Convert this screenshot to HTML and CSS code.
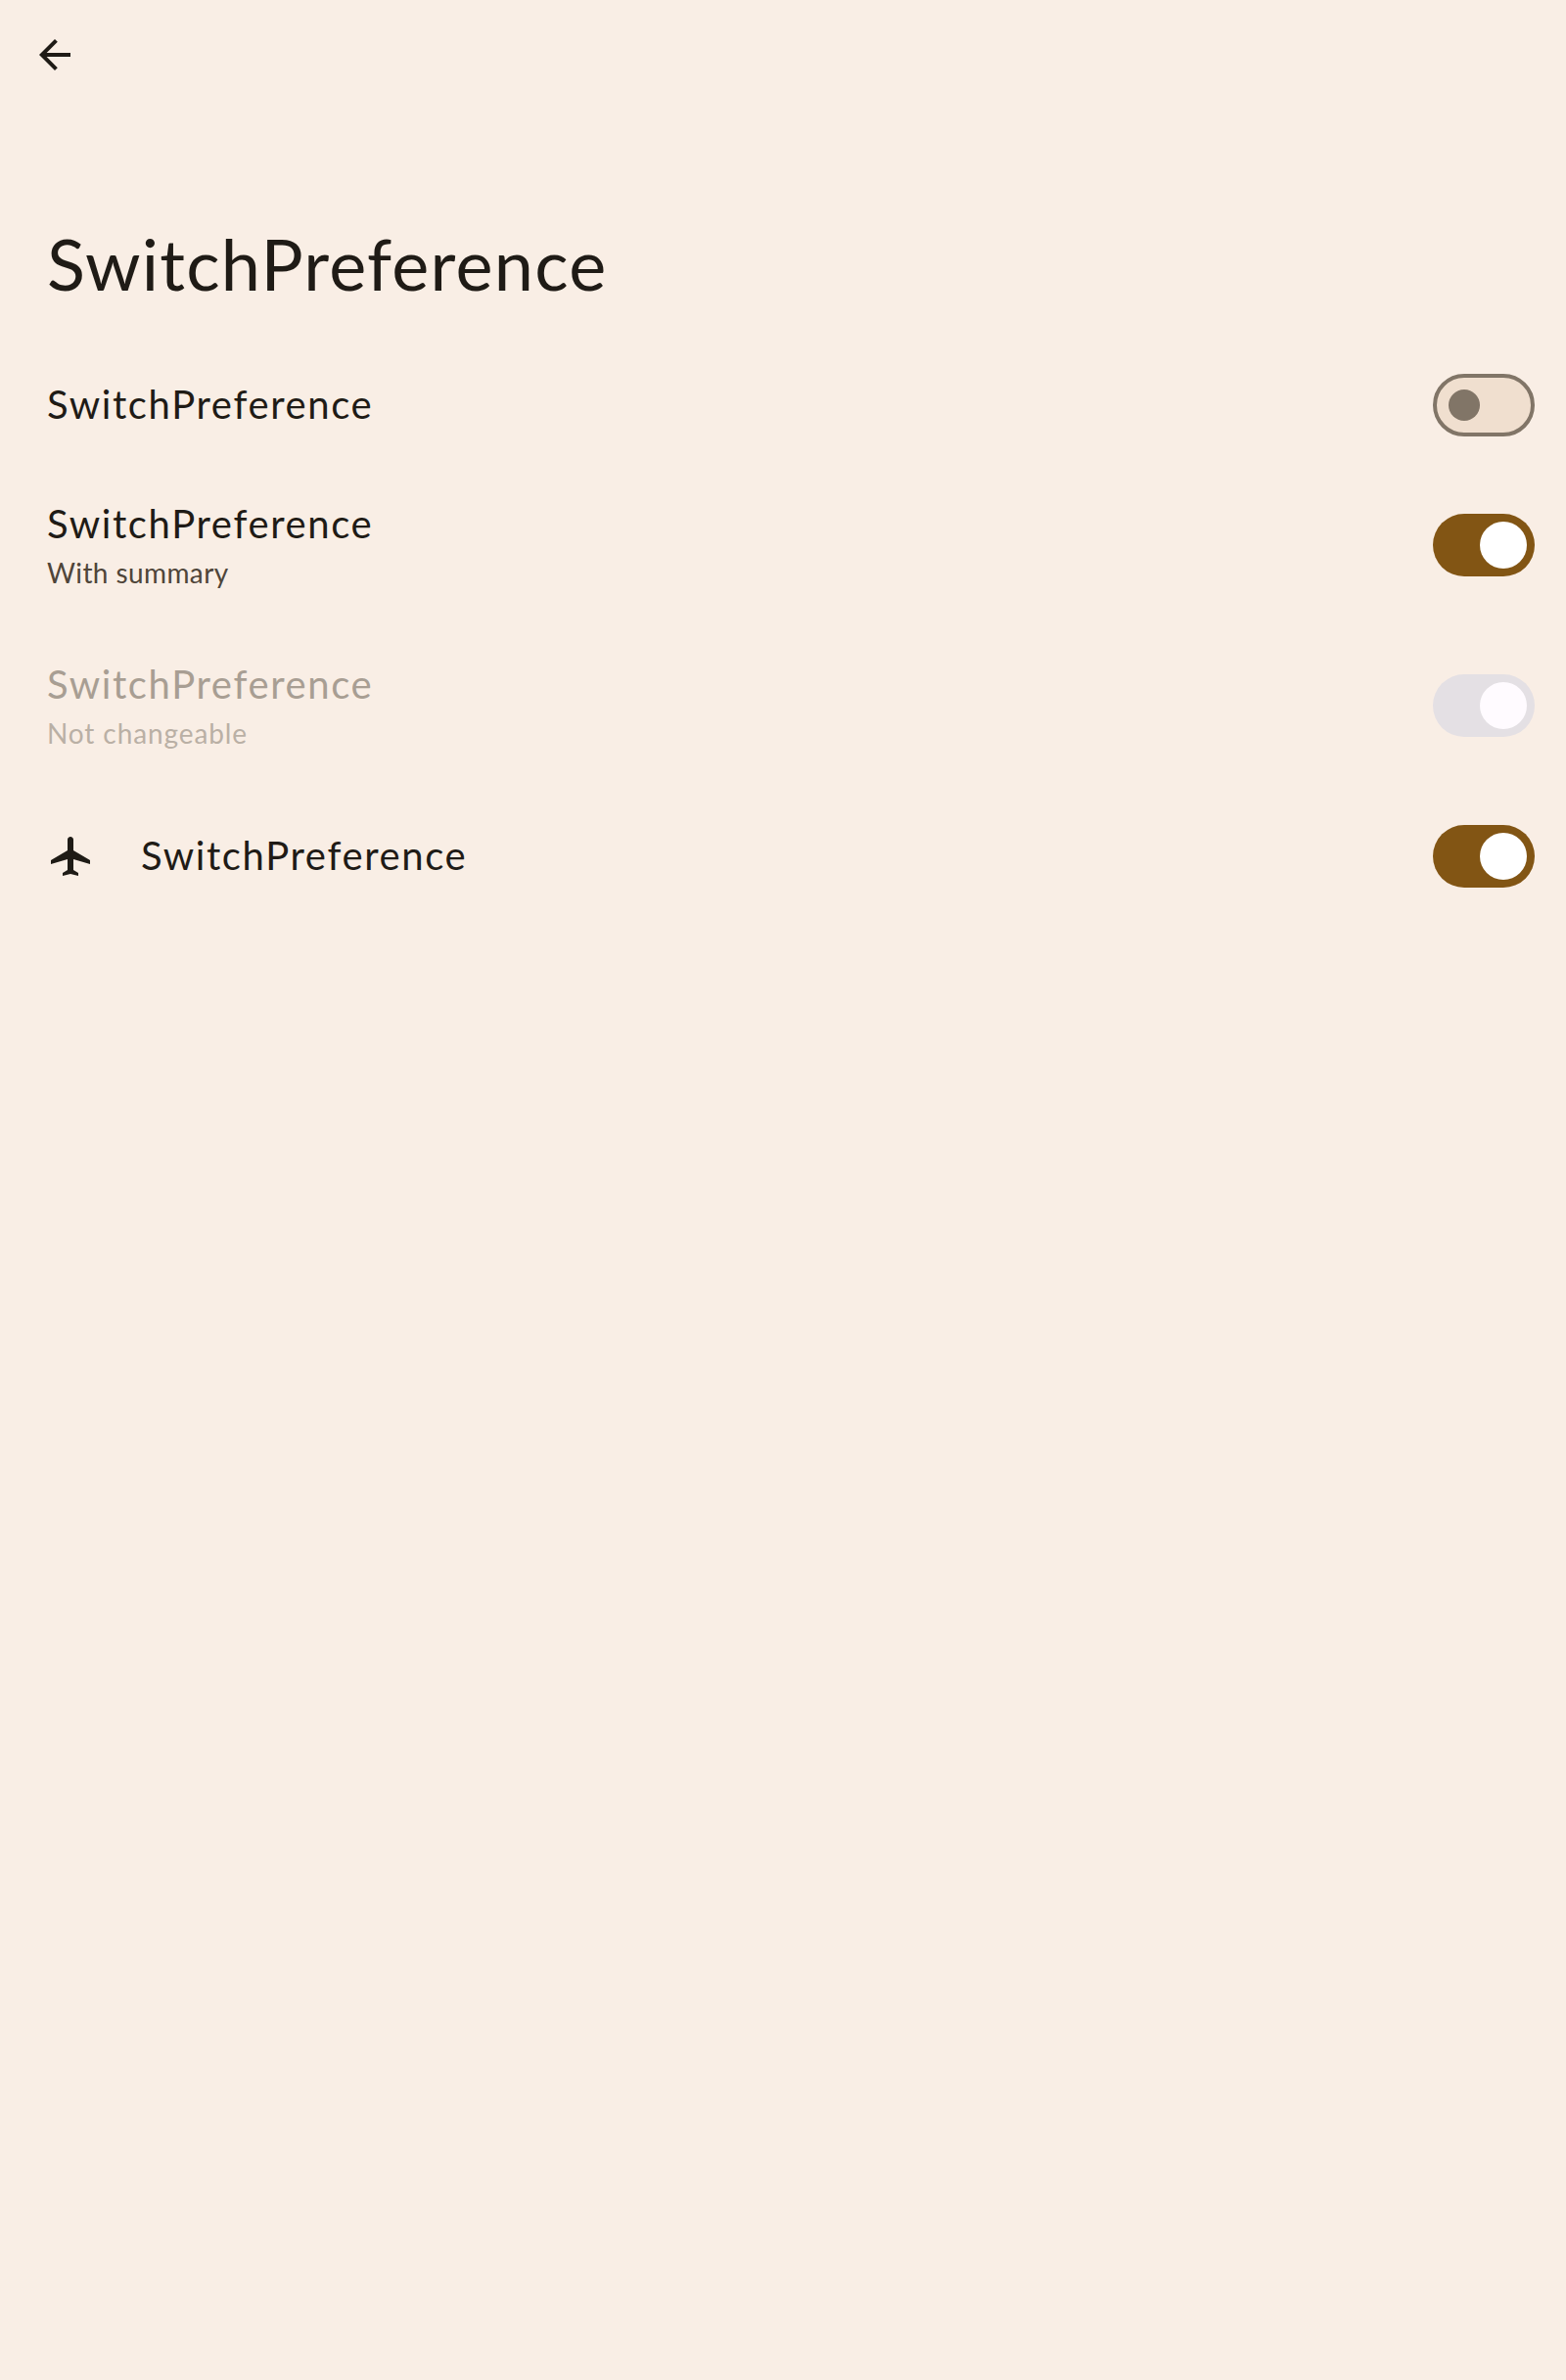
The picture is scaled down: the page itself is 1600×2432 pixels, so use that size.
FILE: index.html
```html
<!DOCTYPE html>
<html lang="en">
<head>
<meta charset="utf-8">
<title>SwitchPreference</title>
<link rel="stylesheet" href="styles.css">
</head>
<body>
<header class="toolbar">
  <svg class="icon" viewBox="0 0 24 24" role="img" aria-label="Back"><path d="M20 11H7.83l5.59-5.59L12 4l-8 8 8 8 1.41-1.41L7.83 13H20z"/></svg>
</header>
<h1 class="page-title">SwitchPreference</h1>
<main class="list">
  <div class="row row-first">
    <div class="text single"><div class="title">SwitchPreference</div></div>
    <div class="switch off"><div class="thumb"></div></div>
  </div>
  <div class="row row-tall">
    <div class="text"><div class="title">SwitchPreference</div><div class="summary">With summary</div></div>
    <div class="switch"><div class="thumb"></div></div>
  </div>
  <div class="row row-tall disabled">
    <div class="text"><div class="title">SwitchPreference</div><div class="summary wide">Not changeable</div></div>
    <div class="switch"><div class="thumb"></div></div>
  </div>
  <div class="row">
    <svg class="icon plane" viewBox="0 0 24 24" aria-hidden="true"><path d="M10.5 3.5C10.5 2.67 11.17 2 12 2s1.5.67 1.5 1.5V9l8.5 5v2l-8.5-2.5V19l2.5 1.5V22l-4-1-4 1v-1.5l2.5-1.5v-5.5L2 16v-2l8.5-5z"/></svg>
    <div class="text single"><div class="title">SwitchPreference</div></div>
    <div class="switch"><div class="thumb"></div></div>
  </div>
</main>
</body>
</html>
```
FILE: styles.css
```css
* { box-sizing: border-box; }
body {
  margin: 0;
  min-height: 2432px;
  background: #f9eee5;
  color: #1f1b16;
  font-family: Lato, sans-serif;
}
.toolbar {
  display: flex;
  align-items: center;
  height: 112px;
  padding-left: 32px;
}
.icon { display: block; width: 48px; height: 48px; fill: currentColor; }
.page-title {
  margin: 0;
  padding: 113px 48px 40px;
  font-size: 72px;
  line-height: 88px;
  font-weight: 400;
  letter-spacing: 1.22px;
}
.row {
  display: flex;
  align-items: center;
  height: 144px;
  padding: 0 32px 0 48px;
}
.row-first { height: 122px; }
.row-tall { height: 164px; }
.plane { margin-right: 48px; }
.text { flex: 1; padding-top: 2px; }
.single { padding: 0 0 2px; }
.title { font-size: 40px; line-height: 48px; letter-spacing: 1.64px; }
.summary {
  margin-top: 6px;
  font-size: 28px;
  line-height: 40px;
  letter-spacing: 0.4px;
  color: #4f4539;
}
.wide { letter-spacing: 0.9px; }
.switch {
  display: flex;
  align-items: center;
  justify-content: flex-end;
  width: 104px;
  height: 64px;
  padding: 0 8px;
  border-radius: 32px;
  background: #825514;
}
.thumb { width: 48px; height: 48px; border-radius: 50%; background: #fff; }
.off {
  justify-content: flex-start;
  padding: 0 12px;
  border: 4px solid #817567;
  background: #f0dfcf;
}
.off .thumb { width: 32px; height: 32px; background: #817567; }
.disabled .title { color: #a89e93; }
.disabled .summary { color: #bab0a5; }
.disabled .switch { background: #e4e0e4; }
.disabled .thumb { background: #fffbff; }
```
